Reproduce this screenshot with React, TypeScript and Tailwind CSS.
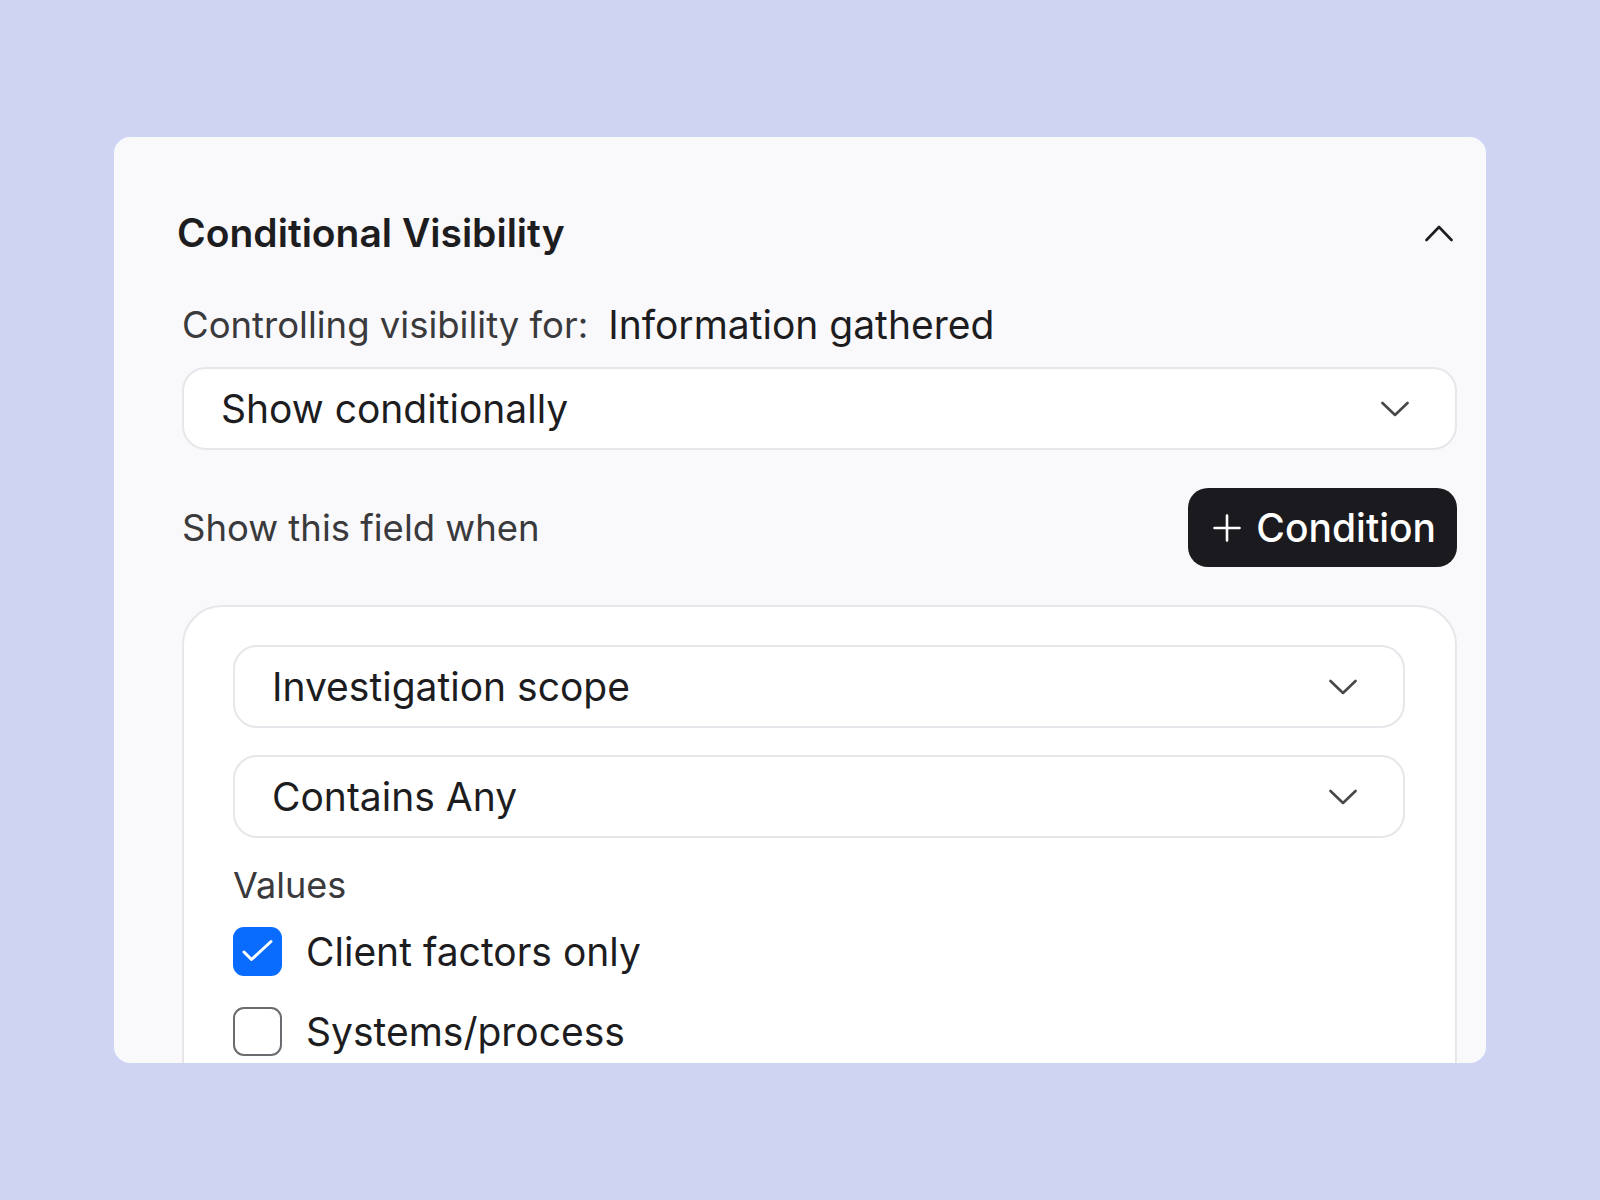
import React from 'react';

const ChevronDown = () => (
  <svg width="28" height="16" viewBox="0 0 28 16" fill="none" className="shrink-0">
    <path d="M1.5 2 L14 14 L26.5 2" stroke="#48484a" strokeWidth="2.6" strokeLinecap="round" strokeLinejoin="round" />
  </svg>
);

const ChevronUp = () => (
  <svg width="28" height="18" viewBox="0 0 28 18" fill="none" className="shrink-0">
    <path d="M1.5 16 L14 3 L26.5 16" stroke="#1d1d1f" strokeWidth="2.6" strokeLinecap="round" strokeLinejoin="round" />
  </svg>
);

const Select = ({ value }: { value: string }) => (
  <div className="flex h-[83px] items-center justify-between rounded-[24px] border-2 border-[#e7e6ea] bg-white pl-[37px] pr-[46px]">
    <span className="text-[39px] leading-[48px] text-[#1d1d1f]">{value}</span>
    <ChevronDown />
  </div>
);

const Checkbox = ({ checked, label }: { checked: boolean; label: string }) => (
  <div className="flex items-center gap-[24px]">
    {checked ? (
      <span className="flex h-[49px] w-[49px] items-center justify-center rounded-[11px] bg-[#0a6cff]">
        <svg width="49" height="49" viewBox="0 0 49 49" fill="none">
          <path d="M11 25 L18.5 32.5 L38 14.5" stroke="#ffffff" strokeWidth="3" strokeLinecap="round" strokeLinejoin="round" />
        </svg>
      </span>
    ) : (
      <span className="h-[49px] w-[49px] rounded-[11px] border-[2.5px] border-[#6c6c70] bg-white" />
    )}
    <span className="text-[39px] leading-[48px] text-[#1d1d1f]">{label}</span>
  </div>
);

export default function App() {
  return (
    <div
      className="min-h-screen w-full bg-[#ced4f2] px-[114px] pt-[137px]"
      style={{ fontFamily: 'Inter, "Noto Sans", sans-serif' }}
    >
      <div className="h-[926px] overflow-hidden rounded-[16px] bg-[#f9f8fb] pt-[72px] pr-[29px]">
        {/* Header */}
        <div className="flex items-center justify-between pl-[63px] pr-[4px]">
          <h2 className="text-[39px] font-semibold leading-[48px] text-[#1d1d1f]">Conditional Visibility</h2>
          <ChevronUp />
        </div>

        <div className="pl-[68px]">
          <div className="mt-[46px] flex items-center">
            <span className="text-[36.5px] leading-[44px] text-[#3a3a3c]">Controlling visibility for:</span>
            <span className="ml-[20px] text-[39px] leading-[44px] text-[#1d1d1f]">Information gathered</span>
          </div>

          <div className="mt-[20px]">
            <Select value="Show conditionally" />
          </div>

          <div className="mt-[38px] flex items-center justify-between">
            <span className="text-[36.5px] leading-[44px] text-[#3a3a3c]">Show this field when</span>
            <button className="flex h-[79px] items-center gap-[15px] rounded-[20px] bg-[#1b1a1e] pl-[25px] pr-[21px] text-white">
              <svg width="28" height="28" viewBox="0 0 28 28" fill="none">
                <path d="M14 1.5 V26.5 M1.5 14 H26.5" stroke="#ffffff" strokeWidth="2.6" strokeLinecap="round" />
              </svg>
              <span className="text-[39px] font-medium leading-[48px]">Condition</span>
            </button>
          </div>

          <div className="mt-[38px] rounded-[40px] border-2 border-[#e7e6ea] bg-white pb-[40px] pl-[49px] pr-[50px] pt-[38px]">
            <div className="flex flex-col gap-[27px]">
              <Select value="Investigation scope" />
              <Select value="Contains Any" />
            </div>
            <div className="mt-[25px] text-[36px] leading-[44px] text-[#3a3a3c]">Values</div>
            <div className="mt-[20px] flex flex-col gap-[31px]">
              <Checkbox checked label="Client factors only" />
              <Checkbox checked={false} label="Systems/process" />
            </div>
          </div>
        </div>
      </div>
    </div>
  );
}
